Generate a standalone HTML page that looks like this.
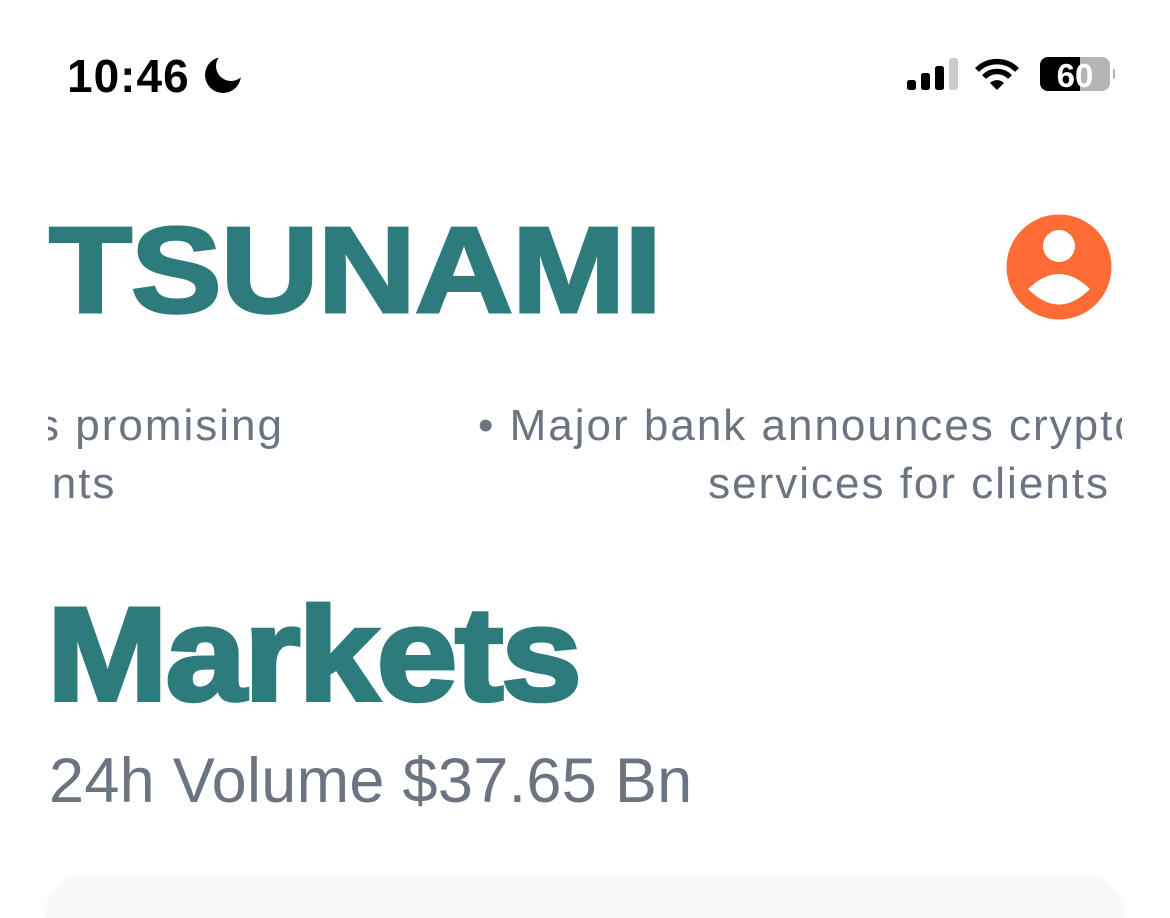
<!DOCTYPE html>
<html><head><meta charset="utf-8"><style>
html,body{margin:0;padding:0;background:#fff;width:1170px;height:918px;overflow:hidden;}
body{position:relative;font-family:"Liberation Sans",sans-serif;}
.abs{position:absolute;white-space:nowrap;}
.time{left:67px;top:49px;font-size:46px;font-weight:bold;color:#000;letter-spacing:1px;}
.title{left:49px;top:200px;font-size:122px;font-weight:bold;color:#2d7b7b;letter-spacing:-1px;line-height:140px;transform:scaleX(1.115);transform-origin:left;-webkit-text-stroke:3px #2d7b7b;}
.mk{left:47px;top:580px;font-size:133px;font-weight:bold;color:#2d7b7b;letter-spacing:-2px;line-height:150px;transform:scaleX(1.09);transform-origin:left;-webkit-text-stroke:4px #2d7b7b;}
.vol{left:49px;top:745px;font-size:63px;color:#6b7480;line-height:72px;letter-spacing:0.3px;}
.ticker{position:absolute;left:48px;top:390px;width:1074px;height:130px;overflow:hidden;}
.tk{position:absolute;font-size:44px;color:#6b7480;line-height:58px;white-space:nowrap;letter-spacing:2px;}
.card{position:absolute;left:46px;top:876px;width:1078px;height:42px;background:#f7f8fa;border-radius:44px 44px 0 0;box-shadow:0 0 6px rgba(0,0,0,0.06);}
</style></head><body>
<div class="abs time">10:46</div>
<svg class="abs" style="left:204px;top:55px" width="40" height="40" viewBox="0 0 40 40">
<defs><mask id="m"><rect width="40" height="40" fill="#fff"/><circle cx="27" cy="11" r="15" fill="#000"/></mask></defs>
<circle cx="19" cy="20" r="18" fill="#000" mask="url(#m)"/>
</svg>
<svg class="abs" style="left:905px;top:56px" width="210" height="36" viewBox="0 0 210 36">
<rect x="2" y="24" width="9" height="10" rx="2.5" fill="#000"/>
<rect x="16" y="17" width="9" height="17" rx="2.5" fill="#000"/>
<rect x="30" y="10" width="9" height="24" rx="2.5" fill="#000"/>
<rect x="44" y="2" width="9" height="32" rx="2.5" fill="#ccc"/>
<path d="M92 34 L85 27 A10 10 0 0 1 99 27 Z" fill="#000"/>
<path d="M79 21 A18 18 0 0 1 105 21" stroke="#000" stroke-width="5.5" fill="none"/>
<path d="M72 14 A28 28 0 0 1 112 14" stroke="#000" stroke-width="5.5" fill="none"/>
<rect x="135" y="1" width="70" height="34" rx="8" fill="#b5b5b5"/>
<path d="M143 1 H175 V35 H143 A8 8 0 0 1 135 27 V9 A8 8 0 0 1 143 1 Z" fill="#000"/>
<path d="M208 13 A5 5 0 0 1 208 23 Z" fill="#b5b5b5"/>
<text x="170" y="31" text-anchor="middle" font-family="Liberation Sans" font-weight="bold" font-size="33" fill="#fff">60</text>
</svg>
<div class="abs title">TSUNAMI</div>
<svg class="abs" style="left:1006px;top:214px" width="106" height="106" viewBox="0 0 106 106">
<circle cx="53" cy="53" r="52.5" fill="#ff6b35"/>
<circle cx="53" cy="32" r="16" fill="#fff"/>
<path d="M22 75 Q53 45 84 75 Q53 106 22 75 Z" fill="#fff"/>
</svg>
<div class="ticker">
<div class="tk" style="right:838px;top:7px;text-align:left">is promising<br>ents</div>
<div class="tk" style="left:430px;top:7px">• Major bank announces crypto</div>
<div class="tk" style="right:12px;top:65px">services for clients</div>
</div>
<div class="abs mk">Markets</div>
<div class="abs vol">24h Volume $37.65 Bn</div>
<div class="card"></div>
</body></html>
